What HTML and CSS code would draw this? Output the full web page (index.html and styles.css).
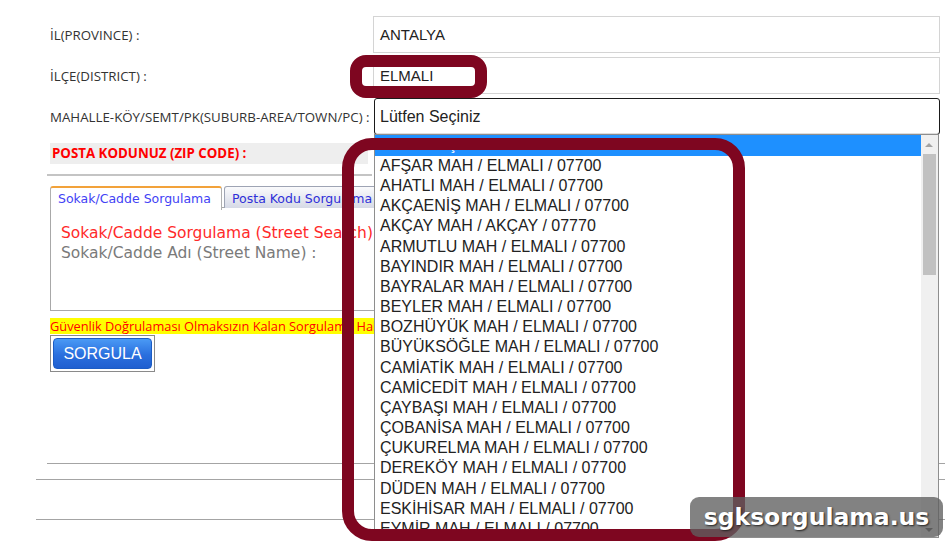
FILE: index.html
```html
<!DOCTYPE html>
<html lang="tr">
<head>
  <meta charset="UTF-8" />
  <title>Posta Kodu Sorgulama</title>
  <link rel="stylesheet" href="styles.css">
</head>
<body>
  <div class="page">
    <div class="form-grid">
      <label class="field-label">İL(PROVINCE) :</label>
      <div class="field-box">ANTALYA</div>
      <label class="field-label">İLÇE(DISTRICT) :</label>
      <div class="field-box">ELMALI</div>
      <label class="field-label">MAHALLE-KÖY/SEMT/PK(SUBURB-AREA/TOWN/PC) :</label>
      <div class="field-select">Lütfen Seçiniz</div>
    </div>

    <div class="zip-row">POSTA KODUNUZ (ZIP CODE) :</div>
    <div class="sep"></div>

    <div class="tabs">
      <div class="tab tab-active">Sokak/Cadde Sorgulama</div>
      <div class="tab">Posta Kodu Sorgulama</div>
    </div>
    <div class="tab-panel">
      <p class="panel-title">Sokak/Cadde Sorgulama (Street Search)</p>
      <p class="panel-text">Sokak/Cadde Adı (Street Name) :</p>
    </div>

    <div class="notice">Güvenlik Doğrulaması Olmaksızın Kalan Sorgulama Hakkı : 5</div>
    <div class="btn-frame">
      <button class="btn-search">SORGULA</button>
    </div>

    <div class="line line-a"></div>
    <div class="line line-b"></div>
    <div class="line line-c"></div>
  </div>

  <div class="dropdown">
    <div class="dd-list">
      <div class="dd-item dd-selected">Lütfen Seçiniz</div>
      <div class="dd-item">AFŞAR MAH / ELMALI / 07700</div>
      <div class="dd-item">AHATLI MAH / ELMALI / 07700</div>
      <div class="dd-item">AKÇAENİŞ MAH / ELMALI / 07700</div>
      <div class="dd-item">AKÇAY MAH / AKÇAY / 07770</div>
      <div class="dd-item">ARMUTLU MAH / ELMALI / 07700</div>
      <div class="dd-item">BAYINDIR MAH / ELMALI / 07700</div>
      <div class="dd-item">BAYRALAR MAH / ELMALI / 07700</div>
      <div class="dd-item">BEYLER MAH / ELMALI / 07700</div>
      <div class="dd-item">BOZHÜYÜK MAH / ELMALI / 07700</div>
      <div class="dd-item">BÜYÜKSÖĞLE MAH / ELMALI / 07700</div>
      <div class="dd-item">CAMİATİK MAH / ELMALI / 07700</div>
      <div class="dd-item">CAMİCEDİT MAH / ELMALI / 07700</div>
      <div class="dd-item">ÇAYBAŞI MAH / ELMALI / 07700</div>
      <div class="dd-item">ÇOBANİSA MAH / ELMALI / 07700</div>
      <div class="dd-item">ÇUKURELMA MAH / ELMALI / 07700</div>
      <div class="dd-item">DEREKÖY MAH / ELMALI / 07700</div>
      <div class="dd-item">DÜDEN MAH / ELMALI / 07700</div>
      <div class="dd-item">ESKİHİSAR MAH / ELMALI / 07700</div>
      <div class="dd-item">EYMİR MAH / ELMALI / 07700</div>
    </div>
    <div class="dd-scroll">
      <span class="arrow-up"></span>
      <span class="thumb"></span>
      <span class="arrow-down"></span>
    </div>
  </div>

  <div class="mark mark-district"></div>
  <div class="mark mark-list"></div>

  <div class="watermark">sgksorgulama.us</div>
</body>
</html>
```

FILE: styles.css
```css
body {
  margin: 0;
  height: 541px;
  overflow: hidden;
  background: #fff;
  font-family: "Open Sans", sans-serif;
  position: relative;
}
.page {
  padding-top: 16px;
}

/* form rows */
.form-grid {
  display: grid;
  grid-template-columns: 323px 567px;
  grid-auto-rows: 37px;
  row-gap: 4px;
  margin-left: 50px;
}
.field-label {
  display: flex;
  align-items: center;
  font-size: 13.3px;
  color: #333;
  white-space: nowrap;
}
.field-box {
  display: flex;
  align-items: center;
  border: 1px solid #d4d4d4;
  padding-left: 6px;
  font-family: "Liberation Sans", Arial, sans-serif;
  font-size: 15px;
  color: #222;
}
.field-select {
  display: flex;
  align-items: center;
  height: 35px;
  margin-left: 1px;
  border: 1px solid #1a1a1a;
  border-radius: 3px;
  padding-left: 5px;
  font-family: "Liberation Sans", Arial, sans-serif;
  font-size: 16px;
  color: #222;
  box-shadow: inset 0 -1px 0 #ddd;
}

.zip-row {
  margin: 8px 0 0 50px;
  width: 316px;
  height: 21px;
  line-height: 21px;
  padding-left: 2px;
  background: #eeeeee;
  color: #f00;
  font-weight: bold;
  font-size: 13.3px;
  white-space: nowrap;
}
.sep {
  margin: 10px 0 0 47px;
  width: 325px;
  height: 2px;
  background: #c4c4c4;
}

/* tabs */
.tabs {
  display: flex;
  gap: 2px;
  margin: 10px 0 0 50px;
  height: 22px;
}
.tab {
  padding: 0 7px;
  font-family: "DejaVu Sans", Verdana, sans-serif;
  font-size: 12.5px;
  line-height: 23px;
  color: #2f2fd8;
  border: 1px solid #9ea4b4;
  border-bottom: none;
  border-radius: 3px 3px 0 0;
  background: linear-gradient(#fafafc, #d6dae6);
  white-space: nowrap;
}
.tab-active {
  width: 156px;
  border-color: #b0b0b0;
  border-top: 2px solid #f2a23a;
  background: #fff;
  color: #4242f5;
  position: relative;
  z-index: 1;
  height: 22px;
  line-height: 22px;
}
.tab-panel {
  margin: -1px 0 0 50px;
  width: 330px;
  height: 104px;
  border: 1px solid #a8a8a8;
  padding: 15px 0 0 10px;
  box-sizing: border-box;
  font-family: "DejaVu Sans", Verdana, sans-serif;
  font-size: 15.5px;
  line-height: 20px;
  white-space: nowrap;
}
.panel-title {
  margin: 0;
  color: #ff2a2a;
}
.panel-text {
  margin: 0;
  color: #7a7a7a;
}

.notice {
  margin: 7px 0 0 50px;
  width: fit-content;
  height: 16px;
  line-height: 16px;
  background: #ffff00;
  color: #f00;
  font-size: 12.8px;
  white-space: nowrap;
}
.btn-frame {
  margin: 1px 0 0 50px;
  width: 105px;
  height: 37px;
  box-sizing: border-box;
  border: 1px solid #8a8a8a;
  padding: 2px;
}
.btn-search {
  display: block;
  width: 99px;
  height: 31px;
  border: 1px solid #1c5cc4;
  border-radius: 4px;
  background: linear-gradient(#4a9af5, #2a6fde 55%, #1f5fd0);
  color: #fff;
  font-family: "Liberation Sans", Arial, sans-serif;
  font-size: 16px;
  padding: 0;
}

/* bottom rules */
.line {
  height: 1px;
  border-top: 1px solid #a4a4a4;
}
.line-a {
  margin: 91px 0 0 47px;
}
.line-b {
  margin: 14px 0 0 36px;
}
.line-c {
  margin: 38px 0 0 36px;
}

/* open select list */
.dropdown {
  position: absolute;
  left: 374px;
  top: 134px;
  width: 563px;
  height: 402px;
  border: 1px solid #8e8e8e;
  background: #fff;
  display: flex;
  z-index: 2;
}
.dd-list {
  flex: 1;
  overflow: hidden;
}
.dd-item {
  height: 20.17px;
  line-height: 20.17px;
  padding-left: 5px;
  font-family: "Liberation Sans", Arial, sans-serif;
  font-size: 16px;
  color: #222;
  white-space: nowrap;
}
.dd-selected {
  height: 21px;
  line-height: 19px;
  background: #1e90ff;
  color: #fff;
}
.dd-scroll {
  width: 17px;
  background: #f0f0f0;
  position: relative;
}
.arrow-up,
.arrow-down {
  position: absolute;
  left: 4px;
  width: 0;
  height: 0;
  border-left: 4px solid transparent;
  border-right: 4px solid transparent;
}
.arrow-up {
  top: 8px;
  border-bottom: 4px solid #a3a3a3;
}
.arrow-down {
  bottom: 5px;
  border-top: 4px solid #505050;
}
.thumb {
  position: absolute;
  left: 2px;
  right: 2px;
  top: 19px;
  height: 121px;
  background: #c1c1c1;
}

/* annotation marks */
.mark {
  position: absolute;
  border: 12px solid #7e0620;
  z-index: 3;
}
.mark-district {
  left: 350px;
  top: 55px;
  width: 113px;
  height: 19px;
  border-radius: 16px;
}
.mark-list {
  left: 342px;
  top: 138px;
  width: 379px;
  height: 379px;
  border-radius: 30px;
}

.watermark {
  position: absolute;
  left: 690px;
  top: 497px;
  width: 253px;
  height: 40px;
  line-height: 40px;
  text-align: center;
  border-radius: 9px;
  background: rgba(95, 95, 95, 0.78);
  color: #fff;
  font-family: "DejaVu Sans", sans-serif;
  font-weight: bold;
  font-size: 23.5px;
  text-shadow: 1px 1px 2px #222;
  z-index: 4;
}
```
